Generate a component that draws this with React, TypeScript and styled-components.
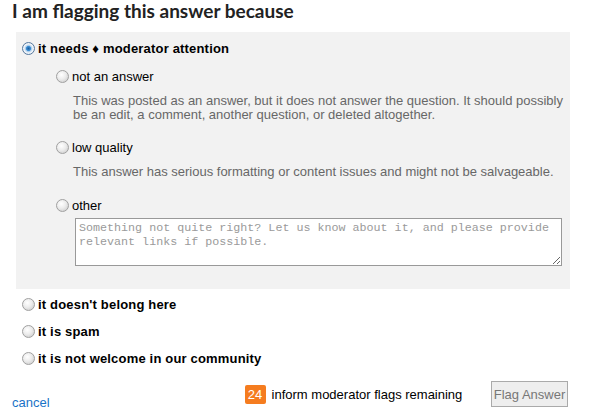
import React from "react";
import styled, { createGlobalStyle } from "styled-components";

const GlobalStyle = createGlobalStyle`
  body {
    margin: 0;
    background: #fff;
    font-family: "Liberation Sans", Arial, sans-serif;
    color: #000;
  }
`;

type SubOption = { label: string; desc?: string; other?: boolean };

const subOptions: SubOption[] = [
  {
    label: "not an answer",
    desc:
      "This was posted as an answer, but it does not answer the question. It should possibly be an edit, a comment, another question, or deleted altogether.",
  },
  {
    label: "low quality",
    desc: "This answer has serious formatting or content issues and might not be salvageable.",
  },
  { label: "other", other: true },
];

const bottomOptions = [
  "it doesn't belong here",
  "it is spam",
  "it is not welcome in our community",
];

function App() {
  return (
    <Page>
      <GlobalStyle />
      <Title>I am flagging this answer because</Title>
      <Panel>
        <MainRow>
          <Radio type="radio" name="flag" defaultChecked />
          <MainLabel>it needs ♦ moderator attention</MainLabel>
        </MainRow>
        <SubList>
          {subOptions.map((o) => (
            <SubItem key={o.label}>
              <SubRow>
                <Radio type="radio" name="sub" />
                <SubLabel>{o.label}</SubLabel>
              </SubRow>
              {o.desc && <Desc>{o.desc}</Desc>}
              {o.other && (
                <Comment placeholder="Something not quite right? Let us know about it, and please provide relevant links if possible." />
              )}
            </SubItem>
          ))}
        </SubList>
      </Panel>
      <BottomList>
        {bottomOptions.map((b) => (
          <BottomRow key={b}>
            <Radio type="radio" name="flag" />
            <MainLabel>{b}</MainLabel>
          </BottomRow>
        ))}
      </BottomList>
      <Footer>
        <Cancel href="#">cancel</Cancel>
        <Remaining>
          <Badge>24</Badge>
          <span>inform moderator flags remaining</span>
        </Remaining>
        <FlagButton disabled>Flag Answer</FlagButton>
      </Footer>
    </Page>
  );
}

export default App;

const Page = styled.div`
  width: 590px;
  height: 418px;
  overflow: hidden;
  display: flex;
  flex-direction: column;
`;

const Title = styled.div`
  font-family: "Lato", "Liberation Sans", sans-serif;
  font-weight: 700;
  font-size: 19px;
  line-height: 22px;
  color: #222;
  margin: 0 0 0 12px;
  height: 22px;
`;

const Panel = styled.div`
  margin: 10px 0 0 16px;
  width: 554px;
  height: 257px;
  box-sizing: border-box;
  background: #f2f2f2;
  padding: 8px 0 0 6px;
`;

const Radio = styled.input`
  appearance: none;
  -webkit-appearance: none;
  margin: 0;
  width: 13px;
  height: 13px;
  border-radius: 50%;
  border: 1px solid #a0a0a0;
  background: radial-gradient(circle at 40% 35%, #fff 0%, #ececec 45%, #c4c4c4 100%);
  box-sizing: border-box;
  flex: none;
  &:checked {
    border-color: #55799f;
    background: radial-gradient(circle at 50% 50%, #1b5c9c 0%, #3a8dd4 28%, #a2c8ea 36%, #f3f6fa 58%, #d3d9e0 100%);
  }
`;

const MainRow = styled.label`
  display: flex;
  align-items: center;
  gap: 3px;
  height: 16px;
`;

const MainLabel = styled.span`
  font-weight: 700;
  font-size: 13px;
  letter-spacing: 0.18px;
  color: #000;
`;

const SubList = styled.div`
  display: flex;
  flex-direction: column;
  padding-left: 34px;
  margin-top: 12px;
`;

const SubItem = styled.div`
  display: flex;
  flex-direction: column;
  margin-bottom: 17px;
  &:nth-child(2) {
    margin-bottom: 18px;
  }
`;

const SubRow = styled.label`
  display: flex;
  align-items: center;
  gap: 3px;
  height: 16px;
`;

const SubLabel = styled.span`
  font-size: 13px;
  color: #000;
`;

const Desc = styled.p`
  margin: 10px 0 0 17px;
  font-size: 13px;
  line-height: 14px;
  color: #676767;
  width: 500px;
`;

const Comment = styled.textarea`
  margin: 5px 0 0 19px;
  width: 487px;
  height: 48px;
  box-sizing: border-box;
  border: 1px solid #999;
  background: #fff;
  padding: 2px 3px;
  font-family: "Liberation Mono", monospace;
  font-size: 11.7px;
  line-height: 14px;
  resize: vertical;
  &::placeholder {
    color: #9a9a9a;
  }
`;

const BottomList = styled.div`
  display: flex;
  flex-direction: column;
  padding-left: 22px;
  margin-top: 2px;
`;

const BottomRow = styled.label`
  display: flex;
  align-items: center;
  gap: 3px;
  height: 27px;
`;

const Footer = styled.div`
  display: flex;
  align-items: center;
  margin-top: 6px;
  padding: 0 22px 0 12px;
`;

const Cancel = styled.a`
  font-size: 13px;
  color: #1a73c7;
  text-decoration: none;
  margin-top: 17px;
`;

const Remaining = styled.div`
  display: flex;
  align-items: center;
  gap: 6px;
  margin-left: 195px;
  font-size: 13px;
  color: #000;
`;

const Badge = styled.span`
  background: #f57c1f;
  color: #fff;
  font-size: 13px;
  width: 21px;
  height: 19px;
  line-height: 19px;
  text-align: center;
  border-radius: 2px;
`;

const FlagButton = styled.button`
  margin-left: auto;
  width: 77px;
  height: 26px;
  border: 1px solid #aaa;
  background: #eee;
  color: #777;
  font-family: "Liberation Sans", Arial, sans-serif;
  font-size: 13px;
  padding: 0;
`;
